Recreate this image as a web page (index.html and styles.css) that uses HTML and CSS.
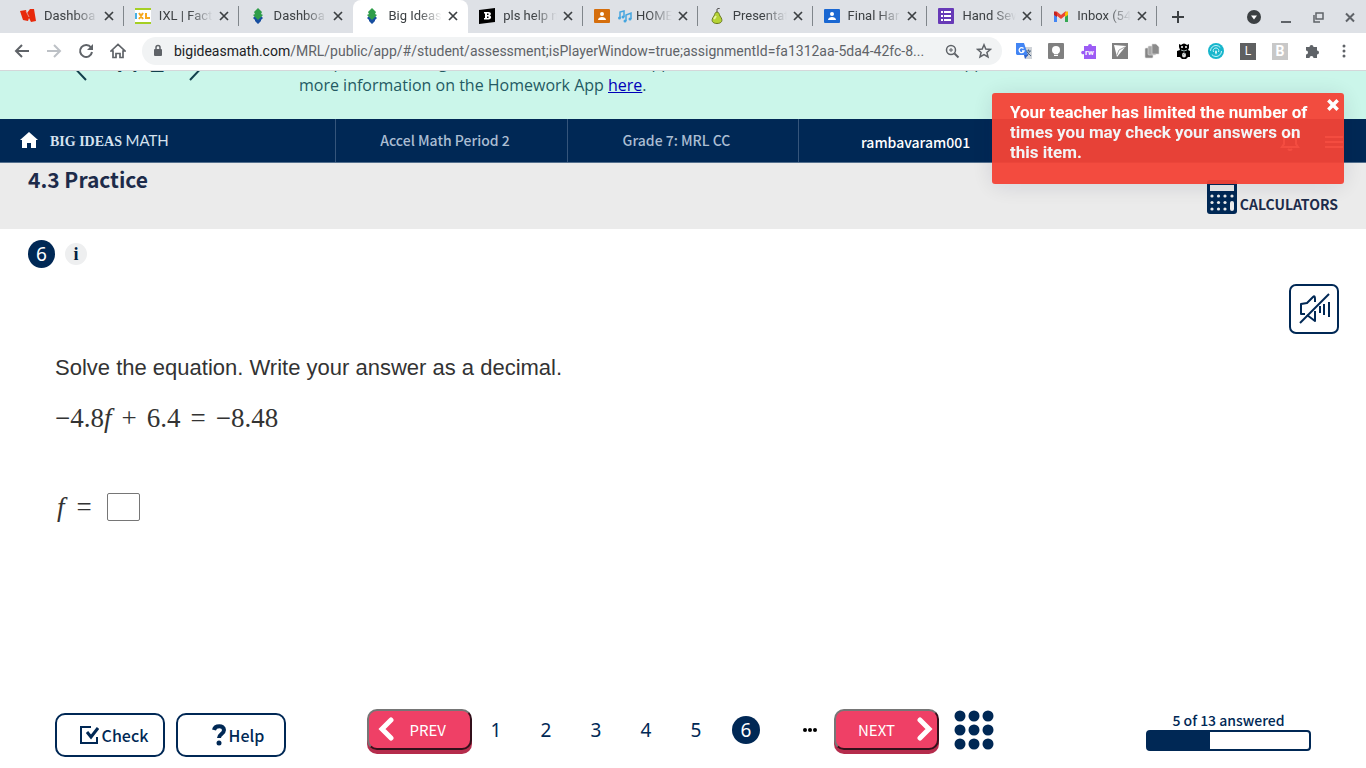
FILE: index.html
```html
<!DOCTYPE html>
<html lang="en">
<head>
    <meta charset="UTF-8">
    <meta name="viewport" content="width=device-width, initial-scale=1.0">
    <title>Big Ideas Math</title>
    <link rel="stylesheet" href="styles.css">
</head>
<body>
    <svg class="sprite" width="0" height="0" aria-hidden="true">
        <symbol id="x" viewBox="0 0 10 10"><path d="M1 1l8 8M9 1l-8 8" fill="none" stroke="currentColor" stroke-width="1.700"/></symbol>
        <symbol id="bim" viewBox="0 0 16 16"><path d="M8 5l5 5-2 2 0 1-3 3-3-3v-1l-2-2z" fill="#174ea0"/><path d="M8 0l4 4-1 2 2 1-5 5-5-5 2-1-1-2z" fill="#2f9d49"/></symbol>
        <symbol id="person" viewBox="0 0 16 16"><rect y="1" width="16" height="14" rx="1" fill="currentColor"/><circle cx="8" cy="6" r="2" fill="#fff"/><path d="M4 12c0-4 8-4 8 0z" fill="#fff"/></symbol>
    </svg>

    <!-- browser window -->
    <header class="browser">
        <div class="tab-strip">
            <div class="tabs" role="tablist">
                <div class="tab" role="tab">
                    <svg class="favicon" viewBox="0 0 16 16"><path d="M0 3l6-1 1 3 3-4 4 0 2 12-5 1-2-4-1 3-5-1z" fill="#e8290b"/><path d="M6 3l3 6" stroke="#dee1e6" stroke-width=".6"/></svg>
                    <span class="tab-title">Dashboa</span>
                    <button class="close" aria-label="Close tab"><svg><use href="#x"/></svg></button>
                </div>
                <div class="tab" role="tab">
                    <svg class="favicon" viewBox="0 0 16 16"><path fill="#fff" d="M0 0h16v16H0z"/><path fill="#a5cf24" d="M0 0h16v2H0zM0 14h16v2H0z"/><path d="M1 5v6" stroke="#1a9edb" stroke-width="1.600"/><path d="M4 5l4 6M8 5l-4 6M11 5v5h4" fill="none" stroke="#f6a81c" stroke-width="2"/></svg>
                    <span class="tab-title">IXL | Fact</span>
                    <button class="close" aria-label="Close tab"><svg><use href="#x"/></svg></button>
                </div>
                <div class="tab" role="tab">
                    <svg class="favicon"><use href="#bim"/></svg>
                    <span class="tab-title">Dashboa</span>
                    <button class="close" aria-label="Close tab"><svg><use href="#x"/></svg></button>
                </div>
                <div class="tab active" role="tab" aria-selected="true">
                    <svg class="favicon"><use href="#bim"/></svg>
                    <span class="tab-title">Big Ideas</span>
                    <button class="close" aria-label="Close tab"><svg><use href="#x"/></svg></button>
                </div>
                <div class="tab" role="tab">
                    <svg class="favicon" viewBox="0 0 16 16"><path d="M0 2l16-2v14L0 16z"/><path d="M5 4h4.500c3 0 3 3 1 3.500 2.500.5 2 4-1 4H5v-1.500h1V5.500H5zM8 5.500v1.500h1.500v-1.500zM8 8.500V10h1.500V8.500z" fill="#fff" fill-rule="evenodd"/></svg>
                    <span class="tab-title">pls help n</span>
                    <button class="close" aria-label="Close tab"><svg><use href="#x"/></svg></button>
                </div>
                <div class="tab" role="tab">
                    <svg class="favicon orange"><use href="#person"/></svg>
                    <span class="tab-title"><svg class="notes" viewBox="0 0 14 14"><path d="M2 9V3l4-1v6M8 12V6l5-2v6" fill="none" stroke="#45a5df" stroke-width="1.500"/><circle cx="1.500" cy="9" r="1.500" fill="#45a5df"/><circle cx="5" cy="8" r="1.500" fill="#45a5df"/><circle cx="7" cy="12" r="1.500" fill="#45a5df"/><circle cx="12" cy="10" r="1.500" fill="#45a5df"/></svg>HOME</span>
                    <button class="close" aria-label="Close tab"><svg><use href="#x"/></svg></button>
                </div>
                <div class="tab" role="tab">
                    <svg class="favicon" viewBox="0 0 16 16"><path d="M8 4c2 0 2 2 3 4 4 5 1 7.500-3 7.500S1 13 5 8c1-2 1-4 3-4z" fill="#b5d334" stroke="#687820"/><path d="M8 4V1l3-1" fill="none" stroke="#555"/><path d="M7 8l-2 3" stroke="#eaf5a0" stroke-width="2"/></svg>
                    <span class="tab-title">Presentat</span>
                    <button class="close" aria-label="Close tab"><svg><use href="#x"/></svg></button>
                </div>
                <div class="tab" role="tab">
                    <svg class="favicon blue"><use href="#person"/></svg>
                    <span class="tab-title">Final Har</span>
                    <button class="close" aria-label="Close tab"><svg><use href="#x"/></svg></button>
                </div>
                <div class="tab" role="tab">
                    <svg class="favicon" viewBox="0 0 16 16"><rect width="16" height="16" rx="1" fill="#673ab7"/><path d="M3 4h2M3 8h2M3 12h2M6 4h7M6 8h7M6 12h7" stroke="#fff" stroke-width="2"/></svg>
                    <span class="tab-title">Hand Sew</span>
                    <button class="close" aria-label="Close tab"><svg><use href="#x"/></svg></button>
                </div>
                <div class="tab" role="tab">
                    <svg class="favicon" viewBox="0 0 16 16"><path d="M1 4h3v10H1z" fill="#4285f4"/><path d="M12 4h3v10h-3z" fill="#34a853"/><path d="M2.500 4.500L8 9l5.500-4.500" fill="none" stroke="#ea4335" stroke-width="3"/><path d="M12 5l2-2 1 1v3l-3 2z" fill="#fbbc04"/><path d="M1 4l1-1 2 2v4L1 7z" fill="#c5221f"/></svg>
                    <span class="tab-title">Inbox (54</span>
                    <button class="close" aria-label="Close tab"><svg><use href="#x"/></svg></button>
                </div>
            </div>
            <button class="new-tab" aria-label="New tab"><svg viewBox="0 0 12 12"><path d="M6 0v12M0 6h12" stroke="currentColor" stroke-width="2"/></svg></button>
            <div class="window-buttons">
                <button aria-label="Search tabs"><svg viewBox="0 0 14 14"><circle cx="7" cy="7" r="7" fill="#3c4043"/><path d="M4 5.500h6L7 9.500z" fill="#fff"/></svg></button>
                <button aria-label="Minimize"><svg viewBox="0 0 14 14"><path d="M2 12h10" stroke="#5f6368" stroke-width="2"/></svg></button>
                <button aria-label="Restore"><svg viewBox="0 0 14 14" fill="none" stroke="#5f6368" stroke-width="1.500"><path d="M5 3h7v6H5z"/><path d="M3 5v7h6"/></svg></button>
                <button aria-label="Close window"><svg viewBox="0 0 14 14"><path d="M3 3.500l8 8M11 3.500l-8 8" stroke="#5f6368" stroke-width="2"/></svg></button>
            </div>
        </div>

        <div class="toolbar">
            <button aria-label="Back"><svg viewBox="0 0 16 16"><path d="M15 8H2M8 2L2 8l6 6" fill="none" stroke="#5f6368" stroke-width="2"/></svg></button>
            <button aria-label="Forward" disabled><svg viewBox="0 0 16 16"><path d="M1 8h13M8 2l6 6-6 6" fill="none" stroke="#bdc1c6" stroke-width="2"/></svg></button>
            <button aria-label="Reload"><svg viewBox="0 0 16 16"><path d="M13 4.500A6 6 0 1 0 14 9" fill="none" stroke="#5f6368" stroke-width="2"/><path d="M15 1v6H9z" fill="#5f6368"/></svg></button>
            <button aria-label="Home"><svg viewBox="0 0 16 16"><path d="M1 8l7-6.500L15 8h-2v6.500h-3v-4H6v4H3V8z" fill="none" stroke="#5f6368" stroke-width="1.700"/></svg></button>
            <div class="address">
                <svg class="lock" viewBox="0 0 10 14"><rect x="1" y="5" width="8" height="7" rx="1" fill="#5f6368"/><path d="M3 6V3.500a2 2 0 0 1 4 0V6" fill="none" stroke="#5f6368" stroke-width="1.500"/></svg>
                <div class="url" role="textbox" contenteditable="true" spellcheck="false" aria-label="Address"><b>bigideasmath.com</b>/MRL/public/app/#/student/assessment;isPlayerWindow=true;assignmentId=fa1312aa-5da4-42fc-8...</div>
                <button aria-label="Zoom"><svg viewBox="0 0 16 16" fill="none" stroke="#5f6368"><circle cx="7" cy="7" r="4.500" stroke-width="1.500"/><path d="M10.500 10.500l4 4" stroke-width="2"/><path d="M5 7h4M7 5v4"/></svg></button>
                <button aria-label="Bookmark"><svg viewBox="0 0 16 16"><path d="M8 1.800l1.800 4.200 4.600.4-3.500 3 1.100 4.500L8 11.500l-4 2.400 1.100-4.500-3.500-3L6.200 6z" fill="none" stroke="#5f6368" stroke-width="1.500"/></svg></button>
            </div>
            <div class="extensions">
                <button aria-label="Translate"><svg viewBox="0 0 16 16"><path d="M7 4h9v12H9z" fill="#cfd3d8"/><path d="M0 0h8l4 12H1l-1-1z" fill="#4285f4"/><path d="M7.500 5.500A2.500 2.500 0 1 0 8 8H6" fill="none" stroke="#fff" stroke-width="1.300"/><path d="M10 8h5M12.500 6.500V8M14 8l-3 5M11 9l4 4" stroke="#4b6484" fill="none"/><path d="M8 12h4l-3 4z" fill="#2e62c9"/></svg></button>
                <button aria-label="Keep"><svg viewBox="0 0 16 16"><rect width="16" height="16" rx="1" fill="#808080"/><circle cx="8" cy="7" r="4" fill="#fff"/><path d="M6 10h4v3H6z" fill="#fff"/><path d="M6 11.500h4" stroke="#808080" stroke-width=".7"/></svg></button>
                <button aria-label="Read and Write"><svg viewBox="0 0 16 16"><path d="M4 3h4a1.500 1.500 0 1 1 4 0h4v13H4v-5a1.800 1.800 0 1 1 0-3z" fill="#9c5cf5"/><text class="rw" x="5" y="12">rw</text></svg></button>
                <button aria-label="Screencastify"><svg viewBox="0 0 16 16"><path d="M0 0h16v16H0z" fill="#808080"/><path d="M2 2l12 1-9 11z" fill="#fff"/><path d="M5 12l2-5 6-3" fill="none" stroke="#808080" stroke-width=".7"/></svg></button>
                <button aria-label="Copy"><svg viewBox="0 0 16 16" stroke="#ddd" stroke-width=".6"><rect x="1" y="5" width="8" height="10" rx="1" fill="#858585"/><rect x="4" y="3" width="8" height="9" rx="1" fill="#a8a8a8"/><path d="M8 1h4l3 3v7H8z" fill="#8b8b8b"/></svg></button>
                <button aria-label="Panda"><svg viewBox="0 0 16 16"><path d="M3 1l2 1q3-3 6 0l2-1v4l-1 2 2 1v6h-2l-2 2H6l-2-2H1V8l3-1-1-3z"/><circle cx="6" cy="4" r="1" fill="#fff"/><circle cx="10" cy="4" r="1" fill="#fff"/><ellipse cx="8" cy="12" rx="2" ry="2.500" fill="#ddd"/><path d="M5 7q3 2 6 0M7 12l2-2" fill="none" stroke="#9aa" stroke-width="1"/></svg></button>
                <button aria-label="Classroom tool"><svg viewBox="0 0 16 16"><circle cx="8" cy="8" r="8" fill="#18b6cc"/><g fill="none" stroke="#c8f5fa"><circle cx="8" cy="8" r="5.500" stroke-dasharray="13 4"/><path d="M5.500 9a2.800 2.800 0 1 1 5 0"/></g><path d="M8 7l1 2-1 3-1-3z" fill="#fff"/></svg></button>
                <button class="letter-l" aria-label="L">L</button>
                <button class="letter-b" aria-label="B">B</button>
                <button aria-label="Extensions"><svg viewBox="0 0 16 16"><path d="M2 4h3.500a2 2 0 1 1 4 0H13v3.500a2 2 0 1 1 0 4V15H9.500a2 2 0 0 0-4 0H2v-3.500a2 2 0 0 0 0-4z" fill="#5f6368"/></svg></button>
                <button aria-label="Menu"><svg viewBox="0 0 16 16" fill="#5f6368"><circle cx="8" cy="3" r="1.500"/><circle cx="8" cy="8" r="1.500"/><circle cx="8" cy="13" r="1.500"/></svg></button>
            </div>
        </div>
    </header>

    <!-- announcement -->
    <section class="banner">
        <div class="pager">
            <button aria-label="Previous message"><svg viewBox="0 0 20 38"><path d="M19 37L2 19 19 1" fill="none" stroke="currentColor" stroke-width="2"/></svg></button>
            <span class="pager-count">1 / 2</span>
            <button aria-label="Next message"><svg viewBox="0 0 20 38"><path d="M1 37l17-18L1 1" fill="none" stroke="currentColor" stroke-width="2"/></svg></button>
        </div>
        <p>Complete new assignments in the Homework App on a tablet or mobile device. Visit the App<br>more information on the Homework App <a href="#">here</a>.</p>
    </section>

    <nav class="site-nav">
        <a class="brand" href="#">
            <svg viewBox="0 0 18 18"><path d="M9 0l9 8h-2v8h-5v-5H7v5H2V8H0z" fill="#fff"/></svg>
            <span class="brand-name">BIG IDEAS <span>MATH</span></span>
        </a>
        <a class="nav-item" href="#">Accel Math Period 2</a>
        <a class="nav-item" href="#">Grade 7: MRL CC</a>
        <div class="user">
            <a class="user-name" href="#">rambavaram001</a>
            <div class="user-tools">
                <button aria-label="Notifications"><svg viewBox="0 0 20 20"><path d="M2 15h16l-2-3V8q0-5-6-6-6 1-6 6v4zM8 17q2 2 4 0" fill="none" stroke="#fff" stroke-width="2"/></svg></button>
                <button aria-label="Menu"><svg viewBox="0 0 20 20"><path d="M1 5h18M1 10h18M1 15h18" stroke="#fff" stroke-width="2"/></svg></button>
            </div>
        </div>
    </nav>

    <div class="title-bar">
        <h1>4.3 Practice</h1>
        <button class="calculators">
            <svg viewBox="0 0 30 34"><rect width="30" height="34" rx="3" fill="#002855"/><path d="M3 5h24v6H3z" fill="#ebebeb"/><g fill="#ebebeb"><circle cx="5" cy="16" r="1.600"/><circle cx="11.500" cy="16" r="1.600"/><circle cx="18" cy="16" r="1.600"/><circle cx="25" cy="16" r="1.600"/><circle cx="5" cy="22.500" r="1.600"/><circle cx="11.500" cy="22.500" r="1.600"/><circle cx="18" cy="22.500" r="1.600"/><circle cx="5" cy="29" r="1.600"/><circle cx="11.500" cy="29" r="1.600"/><circle cx="18" cy="29" r="1.600"/><rect x="23" y="21" width="4" height="10" rx="2"/></g></svg>
            CALCULATORS
        </button>
    </div>

    <main>
        <div class="question-head">
            <span class="circle">6</span>
            <button class="info" aria-label="Information">i</button>
        </div>
        <button class="audio" aria-label="Read aloud off"><svg viewBox="0 0 34 34" fill="none" stroke="#002855" stroke-width="2"><path d="M8 22H4V12l6-1 6-6q2-2 2 2v3M18 19v10l-8-6" stroke-linejoin="round"/><path d="M3 31L32 2"/><path d="M23 14v7M27 12v11M32 10v15"/></svg></button>

        <div class="question">
            <p class="prompt">Solve the equation. Write your answer as a decimal.</p>
            <p class="math"><span>−4.8<i>f</i></span> <span>+</span> <span>6.4</span> <span>=</span> <span>−8.48</span></p>
            <div class="math answer">
                <label for="answer"><i>f</i> <span>=</span></label>
                <input type="text" id="answer">
            </div>
        </div>
    </main>

    <footer>
        <div class="actions">
            <button class="outline"><svg viewBox="0 0 20 20" fill="none" stroke="#002855"><path d="M12 2H2v16h16v-6" stroke-width="2"/><path d="M8 7l4 5 7-9" stroke-width="3"/></svg>Check</button>
            <button class="outline help"><svg viewBox="0 0 14 22"><path d="M2 6c1-5 10-5 10 0 0 4-5 4-5 8" fill="none" stroke="#002855" stroke-width="4"/><circle cx="7" cy="19" r="2.500" fill="#002855"/></svg>Help</button>
        </div>
        <div class="pages">
            <button class="step"><svg viewBox="0 0 16 24"><path d="M13 3L4 12l9 9" fill="none" stroke="#fff" stroke-width="5" stroke-linecap="round"/></svg><span>PREV</span></button>
            <div class="numbers">
                <button>1</button>
                <button>2</button>
                <button>3</button>
                <button>4</button>
                <button>5</button>
                <button class="circle" aria-current="page">6</button>
            </div>
            <button class="more" aria-label="More questions"><svg viewBox="0 0 14 4"><circle cx="2" cy="2" r="2"/><circle cx="7" cy="2" r="2"/><circle cx="12" cy="2" r="2"/></svg></button>
            <button class="step next"><span>NEXT</span><svg viewBox="0 0 16 24"><path d="M3 3l9 9-9 9" fill="none" stroke="#fff" stroke-width="5" stroke-linecap="round"/></svg></button>
            <button class="all" aria-label="All questions"><svg viewBox="0 0 40 40" fill="#002855"><circle cx="6" cy="6" r="5.500"/><circle cx="20" cy="6" r="5.500"/><circle cx="34" cy="6" r="5.500"/><circle cx="6" cy="20" r="5.500"/><circle cx="20" cy="20" r="5.500"/><circle cx="34" cy="20" r="5.500"/><circle cx="6" cy="34" r="5.500"/><circle cx="20" cy="34" r="5.500"/><circle cx="34" cy="34" r="5.500"/></svg></button>
        </div>
        <div class="progress">
            <span id="progress-label">5 of 13 answered</span>
            <div class="progress-bar" role="progressbar" aria-labelledby="progress-label" aria-valuemin="0" aria-valuemax="13" aria-valuenow="5"><div style="width: 38.46%"></div></div>
        </div>
    </footer>

    <div class="toast" role="alert">
        <p>Your teacher has limited the number of times you may check your answers on this item.</p>
        <button aria-label="Dismiss"><svg viewBox="0 0 12 12"><path d="M2 2l8 8M10 2l-8 8" stroke="#fff" stroke-width="3"/></svg></button>
    </div>
</body>
</html>
```
FILE: styles.css
```css
* {
    box-sizing: border-box;
}

body {
    margin: 0;
    min-height: 100vh;
    display: flex;
    flex-direction: column;
    background: white;
    color: #333;
    font-family: "Noto Sans CJK JP", sans-serif;
}

button {
    padding: 0;
    border: 0;
    background: none;
    color: inherit;
    font: inherit;
    cursor: pointer;
}

svg {
    display: block;
}

p, h1 {
    margin: 0;
}

.sprite {
    display: none;
}

/* browser */
.browser {
    font-family: Roboto, sans-serif;
    color: #3c4043;
}

.tab-strip {
    display: flex;
    align-items: center;
    height: 33px;
    padding-left: 9px;
    background: #dee1e6;
}

.tabs {
    display: flex;
    flex: 0 1 1148px;
    min-width: 0;
    height: 33px;
}

.tab {
    flex: 1 1 0;
    min-width: 0;
    display: flex;
    align-items: center;
    padding: 0 10px 1px 11px;
    background: linear-gradient(#80868b, #80868b) right 6px / 1px 20px no-repeat;
}

.tab.active,
.tab:has(+ .active) {
    background: none;
}

.tab.active {
    background: white;
    border-radius: 8px 8px 0 0;
}

.favicon {
    flex: none;
    width: 16px;
    height: 16px;
    margin-right: 8px;
}

.orange {
    color: #d56e0c;
}

.blue {
    color: #1967d2;
}

.tab-title {
    flex: 1;
    display: flex;
    align-items: center;
    gap: 4px;
    min-width: 0;
    overflow: hidden;
    white-space: nowrap;
    font-size: 13px;
    line-height: 16px;
    -webkit-mask-image: linear-gradient(to right, black 30px, transparent);
    mask-image: linear-gradient(to right, black 30px, transparent);
}

.notes {
    flex: none;
    width: 14px;
    height: 14px;
}

.close {
    flex: none;
    margin-left: 6px;
}

.close svg {
    width: 10px;
    height: 10px;
}

.new-tab {
    margin-left: 15px;
}

.new-tab svg {
    width: 12px;
    height: 12px;
}

.window-buttons {
    display: flex;
    gap: 18px;
    margin-left: auto;
    padding-right: 9px;
}

.window-buttons svg {
    width: 14px;
    height: 14px;
}

.toolbar {
    display: flex;
    align-items: center;
    height: 38px;
    padding: 0 14px 1px;
    border-bottom: 1px solid #d5d7da;
    background: white;
}

.toolbar > button {
    margin-right: 16px;
}

.toolbar svg {
    width: 16px;
    height: 16px;
}

.address {
    flex: 1;
    min-width: 0;
    display: flex;
    align-items: center;
    gap: 16px;
    height: 28px;
    padding: 0 10px 0 11px;
    border-radius: 14px;
    background: #f1f3f4;
}

.address .lock {
    width: 10px;
    height: 14px;
}

.url {
    flex: 1;
    min-width: 0;
    overflow: hidden;
    margin-left: -5px;
    white-space: nowrap;
    font-size: 14px;
    line-height: 20px;
    color: #5f6368;
}

.url b {
    font-weight: normal;
    color: #202124;
}

.extensions {
    display: flex;
    gap: 16px;
    padding-left: 14px;
}

.extensions button {
    width: 16px;
    height: 16px;
}

.rw {
    fill: white;
    font: bold 8px Roboto, sans-serif;
}

.extensions .letter-l,
.extensions .letter-b {
    height: 17px;
    background: #5f6061;
    color: white;
    font-size: 12px;
    line-height: 16px;
}

.extensions .letter-b {
    background: #c8c8c8;
    font-size: 14px;
    font-weight: bold;
}

/* announcement */
.banner {
    display: flex;
    align-items: flex-start;
    height: 48px;
    overflow: hidden;
    background: #cbf6ea;
    color: #245a63;
    font-family: "Open Sans", sans-serif;
}

.pager {
    display: flex;
    flex: none;
    align-items: center;
    justify-content: center;
    gap: 24px;
    width: 276px;
    height: 20px;
    margin-top: -19px;
    color: #12404d;
}

.pager svg {
    width: 20px;
    height: 38px;
}

.pager-count {
    font-size: 26px;
    font-weight: 600;
    line-height: 20px;
}

.banner p {
    margin-top: -20px;
    padding-left: 23px;
    white-space: nowrap;
    font-size: 16px;
    line-height: 23px;
}

.banner a {
    color: #0000b8;
}

/* site navigation */
.site-nav {
    display: grid;
    grid-template-columns: 335fr 232fr 231fr 568fr;
    height: 44px;
    border-bottom: 1px solid #54708e;
    background: #002855;
    color: white;
}

.site-nav a {
    color: inherit;
    text-decoration: none;
}

.site-nav .brand,
.site-nav .nav-item,
.user {
    display: flex;
    align-items: center;
}

.brand {
    gap: 12px;
    padding-left: 20px;
}

.brand svg {
    width: 18px;
    height: 18px;
}

.site-nav .brand-name {
    font-family: "Liberation Serif", serif;
    font-size: 14px;
    font-weight: bold;
    color: #d5e2ef;
}

.brand-name span {
    font-family: Lato, sans-serif;
    font-size: 15px;
    font-weight: normal;
}

.site-nav .nav-item,
.user {
    border-left: 1px solid #35557b;
}

.site-nav .nav-item {
    justify-content: center;
    padding: 0 13px 2px 0;
    color: #abbdd2;
    font-size: 14px;
    font-weight: 500;
    line-height: 20px;
}

.user {
    justify-content: space-between;
    padding: 2px 22px 0 62px;
}

.user-name {
    font-size: 14px;
    font-weight: 500;
    line-height: 20px;
}

.user-tools {
    display: flex;
    gap: 24px;
}

.user-tools svg {
    width: 20px;
    height: 20px;
}

.title-bar {
    display: flex;
    justify-content: space-between;
    align-items: flex-start;
    height: 66px;
    padding: 0 28px;
    background: #ebebeb;
    color: #1d2b4a;
}

h1 {
    margin-top: 1px;
    font-size: 21px;
    line-height: 30px;
}

.calculators {
    display: flex;
    align-items: flex-end;
    gap: 3px;
    margin-top: 17px;
    font-size: 14px;
    font-weight: bold;
    line-height: 20px;
}

.calculators svg {
    width: 30px;
    height: 34px;
}

/* question */
main {
    flex: 1;
    display: flex;
    flex-direction: column;
    padding: 11px 27px 0 28px;
}

.question-head {
    display: flex;
    align-items: center;
    gap: 10px;
}

.circle {
    width: 27px;
    height: 28px;
    border-radius: 50%;
    background: #002855;
    color: white;
    text-align: center;
    font-family: "Noto Sans", sans-serif;
    font-size: 19px;
    line-height: 28px;
}

.info {
    width: 22px;
    height: 22px;
    border-radius: 50%;
    background: #eeeff0;
    color: #002040;
    font-family: "Liberation Serif", serif;
    font-size: 18px;
    font-weight: bold;
    line-height: 22px;
}

.audio {
    align-self: flex-end;
    display: grid;
    place-items: center;
    width: 50px;
    height: 50px;
    margin-top: 16px;
    border: 2px solid #002855;
    border-radius: 7px;
}

.audio svg {
    width: 34px;
    height: 34px;
}

.question {
    padding: 20px 27px;
    font-family: "Liberation Sans", Arial, sans-serif;
}

.prompt {
    font-size: 22px;
    line-height: 28px;
}

.math {
    display: flex;
    align-items: center;
    gap: 10px;
    margin-top: 21px;
    font-family: "Liberation Serif", "Times New Roman", serif;
    font-size: 27px;
    line-height: 30px;
}

.answer {
    gap: 15px;
    margin-top: 59px;
    padding-left: 2px;
}

.answer label {
    display: flex;
    gap: 12px;
}

.answer input {
    width: 33px;
    height: 28px;
    border: 1px solid #767676;
    border-radius: 2px;
    font-size: 20px;
}

/* footer */
footer {
    display: grid;
    grid-template-columns: 312px 1fr auto;
    align-items: center;
    padding: 0 55px 11px;
    color: #002855;
}

.actions {
    display: flex;
    gap: 11px;
    padding-top: 10px;
}

.outline {
    display: flex;
    align-items: center;
    justify-content: center;
    gap: 3px;
    width: 110px;
    height: 44px;
    padding-left: 7px;
    border: 2px solid #002855;
    border-radius: 10px;
    font-size: 16px;
    font-weight: 500;
}

.outline svg {
    width: 20px;
    height: 20px;
}

.help {
    padding-left: 14px;
}

.help svg {
    width: 14px;
    height: 22px;
}

.pages {
    display: flex;
    align-items: center;
}

.step {
    display: flex;
    align-items: center;
    justify-content: space-between;
    width: 105px;
    height: 41px;
    margin-bottom: 2px;
    padding: 0 24px 0 9px;
    border: 2px solid;
    border-color: #767676 #33101b #33101b #767676;
    border-radius: 10px;
    background: #ef4066;
    box-shadow: 0 4px #b52c4c;
    color: white;
    font-size: 15px;
}

.step.next {
    padding: 0 4px 0 22px;
}

.step svg {
    width: 16px;
    height: 24px;
}

.numbers {
    display: flex;
    gap: 22px;
    padding-left: 10px;
    font-family: "Noto Sans", sans-serif;
    font-size: 19px;
    line-height: 28px;
}

.numbers button {
    width: 28px;
}

.more {
    margin: 0 17px 0 43px;
    color: black;
}

.more svg {
    width: 14px;
    height: 4px;
}

.all {
    margin-left: 15px;
}

.all svg {
    width: 40px;
    height: 40px;
}

.progress {
    width: 165px;
    text-align: center;
    font-size: 14px;
    font-weight: 500;
    line-height: 20px;
}

.progress-bar {
    height: 21px;
    border: 2px solid #002855;
    border-radius: 4px;
}

.progress-bar div {
    height: 100%;
    background: #002855;
}

/* warning over the page */
.toast {
    position: fixed;
    top: 93px;
    right: 22px;
    display: flex;
    align-items: flex-start;
    width: 352px;
    min-height: 91px;
    padding: 5px 4px 22px 18px;
    border-radius: 3px;
    background: #f44336;
    color: white;
    opacity: 0.95;
    box-shadow: 0 2px 24px rgba(0, 40, 85, 0.12);
    font-family: Roboto, sans-serif;
    font-size: 17px;
    font-weight: bold;
    line-height: 20px;
}

.toast p {
    flex: 1;
    padding-top: 4px;
}

.toast svg {
    width: 14px;
    height: 14px;
}
```
